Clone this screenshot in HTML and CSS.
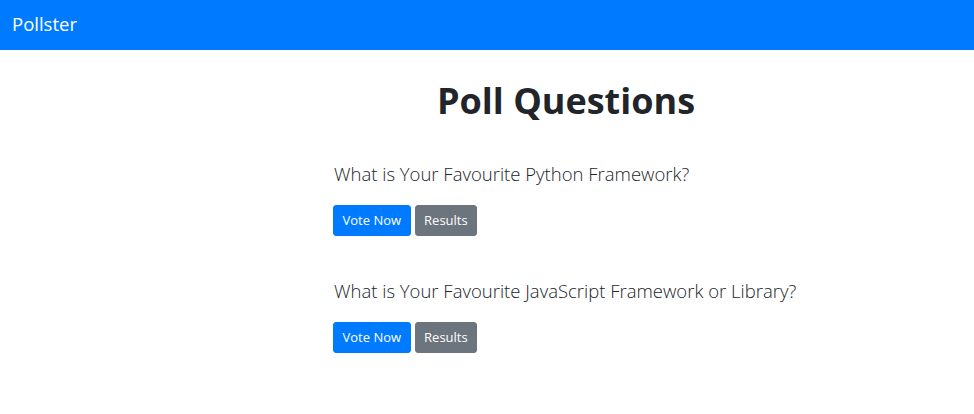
FILE: index.html
```html
<!DOCTYPE html>
<html lang="en">
<head>
<meta charset="utf-8">
<title>Pollster</title>
<link rel="stylesheet" href="styles.css">
</head>
<body>
<nav class="navbar">
  <a class="brand" href="#">Pollster</a>
</nav>
<main class="main">
  <div class="col">
    <h1 class="title">Poll Questions</h1>
    <div class="poll">
      <p class="lead">What is Your Favourite Python Framework?</p>
      <div class="actions">
        <a class="btn btn-primary" href="#">Vote Now</a>
        <a class="btn btn-secondary" href="#">Results</a>
      </div>
    </div>
    <div class="poll">
      <p class="lead">What is Your Favourite JavaScript Framework or Library?</p>
      <div class="actions">
        <a class="btn btn-primary" href="#">Vote Now</a>
        <a class="btn btn-secondary" href="#">Results</a>
      </div>
    </div>
  </div>
</main>
</body>
</html>
```
FILE: styles.css
```css
* { box-sizing: border-box; }
body {
  margin: 0;
  font-family: "Open Sans", "Noto Sans", sans-serif;
  color: #212529;
  background: #fff;
  font-size: 16px;
  line-height: 1.5;
}
.navbar {
  background: #007bff;
  height: 50px;
  display: flex;
  align-items: center;
  padding: 0 12px;
}
.brand {
  color: #fff;
  text-decoration: none;
  font-size: 18.5px;
  line-height: 30px;
  margin-top: -2px;
}
.main {
  padding-left: 333px;
}
.col {
  width: 466px;
}
.title {
  margin: 27px 0 0;
  text-align: center;
  font-size: 36px;
  font-weight: 700;
  line-height: 48px;
  white-space: nowrap;
}
.poll {
  margin-top: 34px;
}
.poll + .poll {
  margin-top: 40px;
}
.lead {
  margin: 0 0 16px;
  padding-left: 1px;
  font-size: 18.5px;
  font-weight: 300;
  line-height: 30px;
  white-space: nowrap;
}
.actions {
  display: flex;
  gap: 4px;
}
.btn {
  display: inline-block;
  height: 31px;
  padding: 0 8.5px;
  font-size: 13px;
  line-height: 29px;
  border: 1px solid transparent;
  border-radius: 3px;
  color: #fff;
  text-decoration: none;
}
.btn-primary { background: #007bff; border-color: #007bff; }
.btn-secondary { background: #6c757d; border-color: #6c757d; }
```
